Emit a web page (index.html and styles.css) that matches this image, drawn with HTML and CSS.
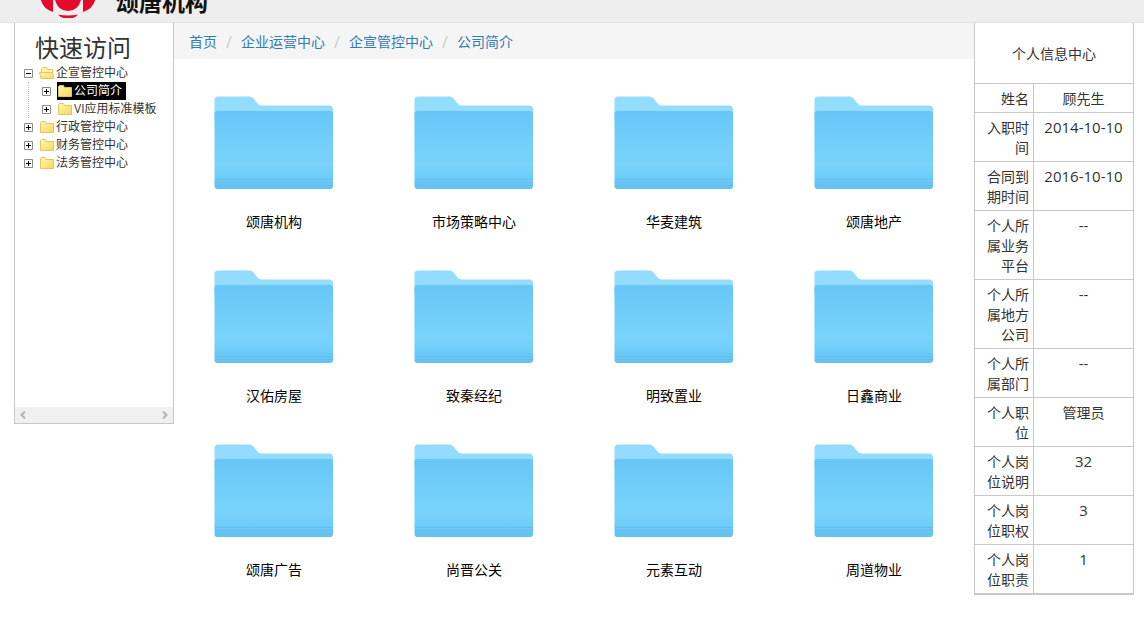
FILE: index.html
```html
<!DOCTYPE html>
<html lang="zh-CN">
<head>
<meta charset="utf-8">
<title>颂唐机构</title>
<link rel="stylesheet" href="styles.css">
</head>
<body>
<svg class="sprite" aria-hidden="true">
  <defs>
    <linearGradient id="folder-face" x1="0" y1="0" x2="0" y2="1">
      <stop offset="0" stop-color="#67c6f6"/><stop offset=".4" stop-color="#72cefa"/><stop offset=".68" stop-color="#79d3fc"/><stop offset=".84" stop-color="#70cdfa"/><stop offset="1" stop-color="#64c1ef"/>
    </linearGradient>
    <linearGradient id="small-face" x1="0" y1="0" x2="1" y2="1">
      <stop offset="0" stop-color="#fff6b0"/><stop offset="1" stop-color="#f5d860"/>
    </linearGradient>
    <symbol id="folder" viewBox="0 0 120 94">
      <path d="M.5 20V4q0-3.500 3.500-3.500h31q3 0 4.500 2l4 5q1.500 2 4 2h67.500q4 0 4 4V24H.5z" fill="#94dcfd"/>
      <path d="M.5 90V18q0-3 3-3H116q3 0 3 3v72q0 3-3 3H3.500q-3 0-3-3z" fill="url(#folder-face)"/>
      <path d="M1 83.500h118M1 86.500h118M1 89.500h118" stroke="#59b8e8" stroke-opacity=".5" fill="none"/>
    </symbol>
    <symbol id="closed" viewBox="0 0 16 16">
      <path d="M1.500 13.500v-10l1-1h4l1 2h7v9z" fill="url(#small-face)" stroke="#e3c563"/>
    </symbol>
    <symbol id="open" viewBox="0 0 16 16">
      <path d="M2.500 13.500v-10l1-1h4l1 2h5v9z" fill="#fff3a5" stroke="#e3c563"/>
      <path d="M2 13.500l-1.500-6h13l1.500 6z" fill="url(#small-face)" stroke="#e3c563"/>
    </symbol>
    <symbol id="plus" viewBox="0 0 9 9"><path d="M.5.5h8v8h-8z" fill="#fff" stroke="#8c8c8c"/><path d="M2 4.500h5M4.500 2v5" stroke="#000"/></symbol>
    <symbol id="minus" viewBox="0 0 9 9"><path d="M.5.5h8v8h-8z" fill="#fff" stroke="#8c8c8c"/><path d="M2 4.500h5" stroke="#000"/></symbol>
  </defs>
</svg>
<header class="topbar">
  <div class="brand">
    <svg class="brand-mark" viewBox="0 0 56 56" aria-hidden="true">
      <g fill="#e50a2d"><path d="M13 12v38Q3 47 .5 37V24Q3 16 13 12zM43 12v38q10-3 12.500-13V24Q53 16 43 12zM15 12h26v26q-3 11-13 11T15 38zM18 52.500q10 2 20 0-3 4-10 4t-10-4z"/></g>
    </svg>
    <span class="brand-name">颂唐机构</span>
  </div>
</header>
<div class="layout">
  <aside class="sidebar">
    <h1 class="sidebar-title">快速访问</h1>
    <ul class="tree">
      <li><a class="node" href="#"><svg class="toggle"><use href="#minus"/></svg><svg class="mini"><use href="#open"/></svg><span>企宣管控中心</span></a>
        <ul class="subtree">
          <li><a class="node" href="#"><svg class="toggle"><use href="#plus"/></svg><span class="selected"><svg class="mini"><use href="#closed"/></svg><span>公司简介</span></span></a></li>
          <li><a class="node" href="#"><svg class="toggle"><use href="#plus"/></svg><svg class="mini"><use href="#closed"/></svg><span>VI应用标准模板</span></a></li>
        </ul>
      </li>
      <li><a class="node" href="#"><svg class="toggle"><use href="#plus"/></svg><svg class="mini"><use href="#closed"/></svg><span>行政管控中心</span></a></li>
      <li><a class="node" href="#"><svg class="toggle"><use href="#plus"/></svg><svg class="mini"><use href="#closed"/></svg><span>财务管控中心</span></a></li>
      <li><a class="node" href="#"><svg class="toggle"><use href="#plus"/></svg><svg class="mini"><use href="#closed"/></svg><span>法务管控中心</span></a></li>
    </ul>
    <div class="scrollbar">
      <button class="arrow" type="button" aria-label="向左滚动"><svg viewBox="0 0 8 8"><path d="M6 .5L2.500 4 6 7.500"/></svg></button>
      <button class="arrow" type="button" aria-label="向右滚动"><svg viewBox="0 0 8 8"><path d="M2 .5L5.500 4 2 7.500"/></svg></button>
    </div>
  </aside>
  <main class="content">
    <nav class="breadcrumb"><a href="#">首页</a><i>/</i><a href="#">企业运营中心</a><i>/</i><a href="#">企宣管控中心</a><i>/</i><a href="#">公司简介</a></nav>
    <div class="folders">
      <a class="folder" href="#"><svg><use href="#folder"/></svg><span>颂唐机构</span></a>
      <a class="folder" href="#"><svg><use href="#folder"/></svg><span>市场策略中心</span></a>
      <a class="folder" href="#"><svg><use href="#folder"/></svg><span>华麦建筑</span></a>
      <a class="folder" href="#"><svg><use href="#folder"/></svg><span>颂唐地产</span></a>
      <a class="folder" href="#"><svg><use href="#folder"/></svg><span>汉佑房屋</span></a>
      <a class="folder" href="#"><svg><use href="#folder"/></svg><span>致秦经纪</span></a>
      <a class="folder" href="#"><svg><use href="#folder"/></svg><span>明致置业</span></a>
      <a class="folder" href="#"><svg><use href="#folder"/></svg><span>日鑫商业</span></a>
      <a class="folder" href="#"><svg><use href="#folder"/></svg><span>颂唐广告</span></a>
      <a class="folder" href="#"><svg><use href="#folder"/></svg><span>尚晋公关</span></a>
      <a class="folder" href="#"><svg><use href="#folder"/></svg><span>元素互动</span></a>
      <a class="folder" href="#"><svg><use href="#folder"/></svg><span>周道物业</span></a>
    </div>
  </main>
  <aside class="profile">
    <table class="info">
      <caption>个人信息中心</caption>
      <tbody>
        <tr><th scope="row">姓名</th><td>顾先生</td></tr>
        <tr><th scope="row">入职时间</th><td class="num">2014-10-10</td></tr>
        <tr><th scope="row">合同到期时间</th><td class="num">2016-10-10</td></tr>
        <tr><th scope="row">个人所属业务平台</th><td class="num">--</td></tr>
        <tr><th scope="row">个人所属地方公司</th><td class="num">--</td></tr>
        <tr><th scope="row">个人所属部门</th><td class="num">--</td></tr>
        <tr><th scope="row">个人职位</th><td>管理员</td></tr>
        <tr><th scope="row">个人岗位说明</th><td class="num">32</td></tr>
        <tr><th scope="row">个人岗位职权</th><td class="num">3</td></tr>
        <tr><th scope="row">个人岗位职责</th><td class="num">1</td></tr>
      </tbody>
    </table>
  </aside>
</div>
</body>
</html>
```
FILE: styles.css
```css
* { box-sizing: border-box; }
body {
  margin: 0;
  background: #fff;
  color: #333;
  font: 14px/20px "Open Sans", "Noto Sans CJK SC", sans-serif;
}
a { color: inherit; text-decoration: none; }
ul { margin: 0; padding: 0; list-style: none; }
.sprite { position: absolute; width: 0; height: 0; }

.topbar {
  display: flex;
  align-items: flex-end;
  height: 23px;
  padding: 0 40px 4px;
  overflow: hidden;
  background: #eee;
  border-bottom: 1px solid #e2e2e2;
}
.brand { display: flex; align-items: flex-end; gap: 20px; }
.brand-mark { width: 56px; height: 56px; }
.brand-name {
  padding-bottom: 5px;
  color: #111;
  font: 500 23px/24px "Noto Sans CJK SC", sans-serif;
  font-weight: bold;
}

.layout { display: flex; align-items: flex-start; padding: 0 10px 0 14px; }

.sidebar {
  display: flex;
  flex: 0 0 160px;
  flex-direction: column;
  height: 401px;
  border: 1px solid #c8c8c8;
  border-top: 0;
}
.sidebar-title {
  margin: 0;
  padding: 9px 20px 0;
  font-size: 24px;
  font-weight: 400;
  line-height: 32px;
}
.tree { flex: 1; padding-left: 9px; font-size: 12px; line-height: 20px; white-space: nowrap; }
.subtree { margin-left: 4px; padding-left: 14px; border-left: 1px dotted #bbb; }
.subtree .node { margin-left: -1px; }
.node { display: flex; align-items: center; height: 18px; }
.toggle { width: 9px; height: 9px; margin-right: 6px; }
.mini { width: 16px; height: 16px; margin-right: 1px; }
.selected { display: flex; align-items: center; height: 18px; padding-right: 4px; background: #000; color: #fff; }
.scrollbar { display: flex; justify-content: space-between; height: 16px; padding: 0 4px; background: #f0f0f0; }
.arrow { display: flex; align-items: center; padding: 0; border: 0; background: none; }
.arrow svg { width: 8px; height: 8px; fill: none; stroke: #b4b4b4; stroke-width: 2; }

.content { flex: 1; }
.breadcrumb { display: flex; padding: 9px 15px 7px; background: #f5f5f5; color: #337ab7; }
.breadcrumb i { width: 24px; color: #ccc; font-size: 16px; font-style: normal; text-align: center; }
.folders {
  display: grid;
  grid-template-columns: repeat(4, 1fr);
  row-gap: 38px;
  padding-top: 37px;
  color: #000;
}
.folder { display: flex; flex-direction: column; align-items: center; gap: 22px; }
.folder svg { width: 120px; height: 94px; }

.profile { flex: 0 0 160px; border-bottom: 1px solid #c8c8c8; }
.info { width: 100%; border-collapse: collapse; table-layout: fixed; }
.info caption { padding: 21px 0 19px; border: solid #c8c8c8; border-width: 0 1px; }
.info th, .info td { padding: 5px 4px 3px; border: 1px solid #c8c8c8; font-weight: 400; vertical-align: top; }
.info th { width: 59px; text-align: right; }
.info td { text-align: center; }
.info .num { padding: 4px; font-size: 15px; }
```
